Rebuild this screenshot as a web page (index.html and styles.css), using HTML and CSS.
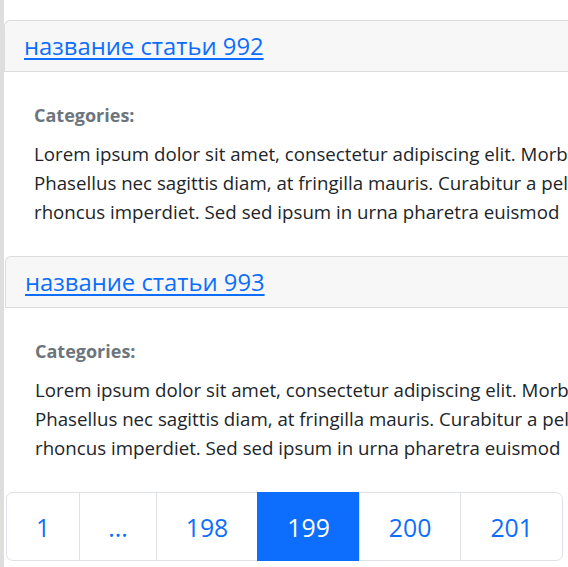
FILE: index.html
```html
<!DOCTYPE html>
<html lang="ru">
<head>
<meta charset="utf-8">
<title>Статьи</title>
<link rel="stylesheet" href="styles.css">
</head>
<body>
<div class="rail"></div>
<main class="main">
  <article class="card">
    <header class="card-header"><a href="#" class="title">название статьи 992</a></header>
    <div class="card-body">
      <div class="cats">Categories:</div>
      <p class="text"><span class="line">Lorem ipsum dolor sit amet, consectetur adipiscing elit. Morbi vitae justo sed.</span><span class="line">Phasellus nec sagittis diam, at fringilla mauris. Curabitur a pellentesque nisl</span><span class="line">rhoncus imperdiet. Sed sed ipsum in urna pharetra euismod</span></p>
    </div>
  </article>
  <article class="card card-shift">
    <header class="card-header"><a href="#" class="title">название статьи 993</a></header>
    <div class="card-body">
      <div class="cats">Categories:</div>
      <p class="text"><span class="line">Lorem ipsum dolor sit amet, consectetur adipiscing elit. Morbi vitae justo sed.</span><span class="line">Phasellus nec sagittis diam, at fringilla mauris. Curabitur a pellentesque nisl</span><span class="line">rhoncus imperdiet. Sed sed ipsum in urna pharetra euismod</span></p>
    </div>
  </article>
  <nav class="pagination">
    <a href="#" class="page">1</a>
    <span class="page dots">...</span>
    <a href="#" class="page">198</a>
    <span class="page active">199</span>
    <a href="#" class="page">200</a>
    <a href="#" class="page">201</a>
  </nav>
</main>
</body>
</html>
```
FILE: styles.css
```css
html, body {
  margin: 0;
  padding: 0;
  background: #fff;
}
body {
  display: flex;
  overflow: hidden;
  height: 567px;
  font-family: "Segoe UI", "Open Sans", "Noto Sans", sans-serif;
  color: #212529;
}
.rail {
  flex: none;
  width: 4px;
  background: #dedede;
}
.main {
  flex: none;
  width: 760px;
  display: flex;
  flex-direction: column;
  padding-top: 20px;
}
.card {
  display: flex;
  flex-direction: column;
}
.card-shift {
  margin-left: 1px;
}
.card-header {
  height: 50px;
  display: flex;
  align-items: center;
  padding: 0 19px;
  background: #f7f7f7;
  border-top: 1px solid #dcdcdc;
  border-left: 1px solid #dcdcdc;
  border-bottom: 1px solid #dcdcdc;
  border-top-left-radius: 6px;
}
.title {
  font-size: 23.8px;
  line-height: 29px;
  color: #0d6efd;
  text-decoration: underline;
  text-underline-offset: 3px;
}
.card-body {
  padding: 28.5px 30px 30.5px;
}
.cats {
  font-size: 18px;
  line-height: 29px;
  font-weight: 700;
  color: #6c757d;
  margin-bottom: 9px;
}
.text {
  margin: 0;
  font-size: 18.7px;
  line-height: 29px;
}
.line {
  display: block;
  white-space: nowrap;
}
.pagination {
  display: flex;
  margin-left: 2px;
  width: max-content;
}
.page {
  display: flex;
  align-items: center;
  height: 67px;
  padding: 0 29px;
  font-size: 24.8px;
  color: #0d6efd;
  text-decoration: none;
  border: 1px solid #dee2e6;
  margin-left: -1px;
  background: #fff;
}
.page.dots {
  padding: 0 28px;
}
.page:first-child {
  margin-left: 0;
  border-radius: 7px 0 0 7px;
}
.page:last-child {
  border-radius: 0 7px 7px 0;
}
.page.active {
  background: #0d6efd;
  border-color: #0d6efd;
  color: #fff;
}
```
